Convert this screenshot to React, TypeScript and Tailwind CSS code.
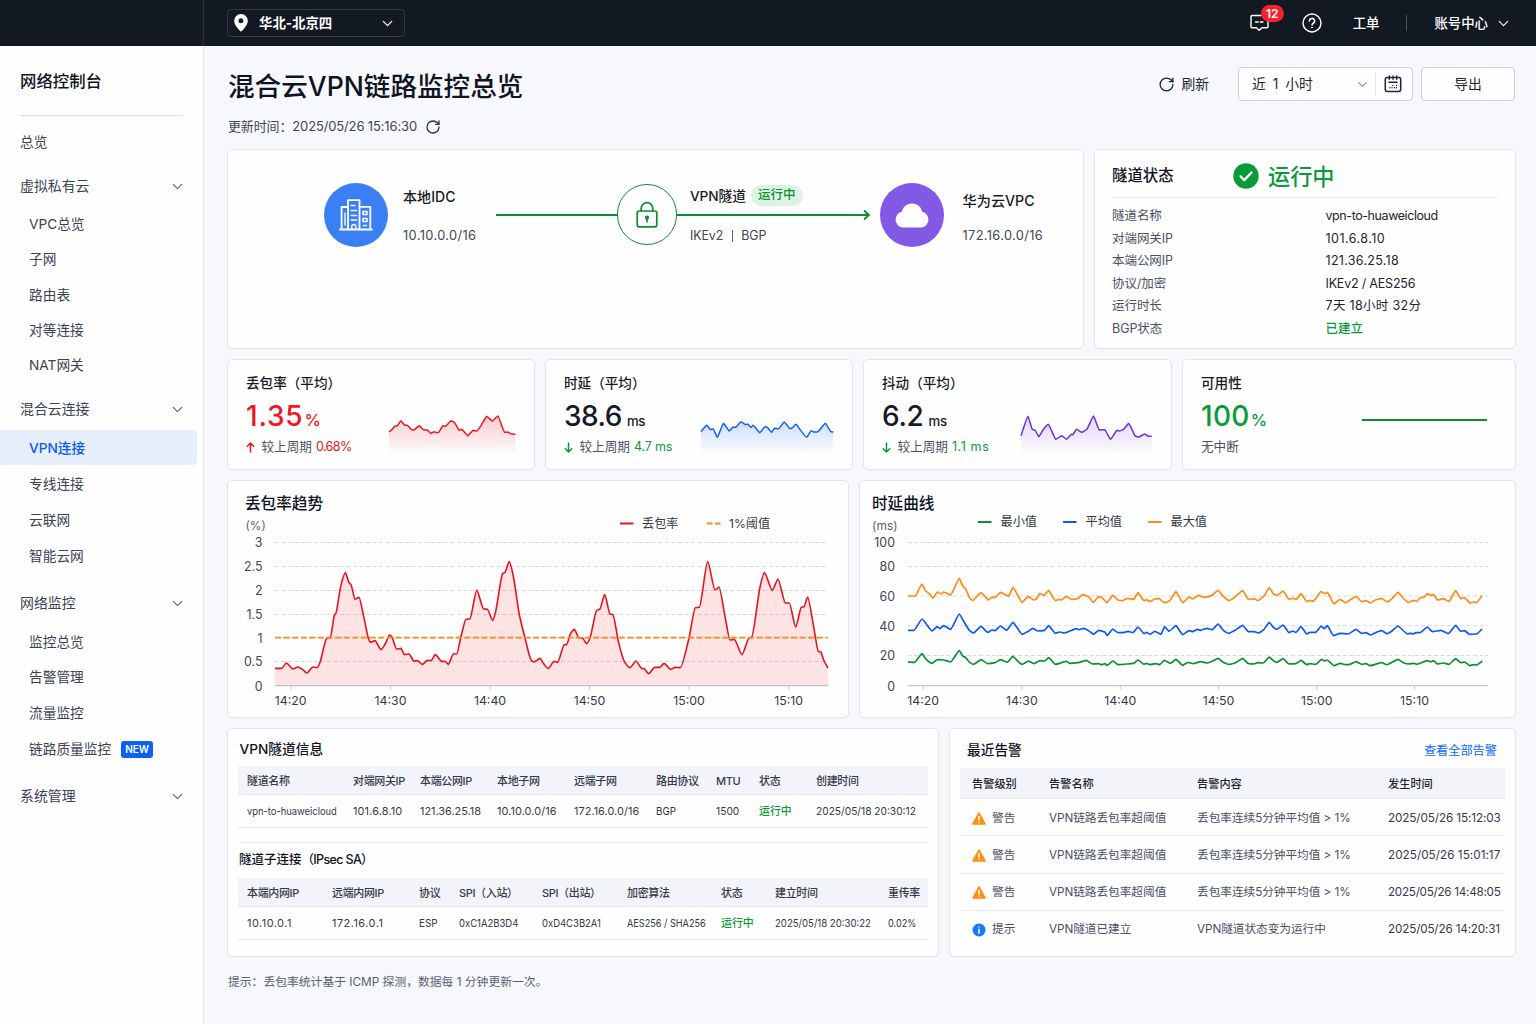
import React from "react";
import { ChevronDown, RotateCw } from "lucide-react";

type Point = [number, number];

/* ---------- chart data: flat x,y pairs ---------- */

const LOSS = [
  150, 571, 170, 571, 184, 555, 204, 573, 218, 567, 236, 577, 245, 585, 264, 567, 277, 569, 286, 550, 303, 485, 310, 478, 316, 480,
  328, 412, 333, 405, 347, 325, 361, 284, 372, 314, 378, 320, 390, 364, 402, 358, 415, 410, 430, 480, 436, 493, 450, 488, 468, 515,
  482, 495, 494, 471, 500, 475, 515, 513, 528, 511, 538, 530, 552, 528, 567, 549, 577, 548, 592, 559, 607, 547, 618, 548, 631, 530,
  650, 550, 660, 550, 670, 559, 685, 528, 695, 528, 708, 475, 723, 424, 735, 422, 755, 337, 776, 393, 787, 394, 803, 427, 812, 400,
  833, 287, 840, 283, 853, 251, 866, 300, 882, 405, 900, 480, 918, 545, 927, 552, 945, 541, 955, 556, 970, 571, 987, 550, 998, 553,
  1018, 500, 1025, 500, 1035, 470, 1048, 454, 1062, 480, 1072, 480, 1085, 497, 1095, 480, 1115, 397, 1125, 393, 1139, 349, 1155, 408,
  1164, 410, 1180, 490, 1198, 550, 1215, 569, 1233, 549, 1251, 572, 1257, 572, 1271, 587, 1289, 568, 1305, 568, 1317, 556, 1337, 574,
  1350, 568, 1366, 569, 1392, 480, 1411, 389, 1423, 388, 1448, 251, 1470, 336, 1482, 327, 1500, 415, 1515, 486, 1528, 484, 1551, 530,
  1572, 480, 1580, 478, 1605, 327, 1618, 284, 1642, 337, 1659, 303, 1681, 375, 1693, 375, 1712, 447, 1729, 388, 1737, 386, 1748, 357,
  1765, 440, 1780, 520, 1787, 522, 1796, 546, 1809, 570,
];

const LAT_MAX = [
  150, 354, 172, 354, 192, 318, 203, 339, 213, 346, 225, 361, 238, 342, 250, 348, 257, 342, 278, 351, 304, 301, 315, 325, 322, 331,
  335, 360, 345, 367, 369, 344, 392, 366, 402, 357, 411, 359, 427, 343, 452, 355, 465, 328, 492, 373, 511, 355, 527, 366, 535, 363,
  545, 347, 558, 352, 572, 338, 592, 368, 602, 364, 610, 366, 625, 355, 640, 364, 661, 361, 673, 350, 690, 355, 706, 373, 722, 356,
  731, 358, 747, 374, 764, 352, 780, 366, 793, 368, 808, 361, 827, 364, 840, 344, 858, 368, 867, 365, 875, 371, 890, 363, 903, 361,
  918, 374, 935, 368, 954, 341, 974, 374, 993, 357, 1004, 363, 1021, 352, 1036, 358, 1061, 353, 1080, 337, 1096, 355, 1113, 368,
  1131, 357, 1154, 338, 1171, 364, 1189, 362, 1199, 368, 1218, 354, 1234, 329, 1246, 347, 1258, 352, 1275, 339, 1293, 364, 1304, 360,
  1314, 365, 1329, 347, 1347, 371, 1356, 367, 1366, 370, 1389, 341, 1401, 347, 1408, 343, 1428, 378, 1446, 364, 1463, 374, 1476, 366,
  1494, 355, 1511, 371, 1524, 368, 1537, 375, 1552, 366, 1571, 361, 1587, 372, 1603, 361, 1620, 343, 1636, 361, 1651, 373, 1668, 367,
  1676, 371, 1688, 358, 1698, 358, 1708, 347, 1718, 352, 1726, 349, 1739, 366, 1755, 362, 1773, 370, 1793, 338, 1808, 362, 1820, 359,
  1836, 375, 1846, 372, 1856, 374, 1872, 353,
];

const LAT_AVG = [
  150, 457, 168, 457, 192, 423, 222, 459, 238, 446, 246, 452, 257, 443, 278, 454, 304, 408, 318, 432, 335, 458, 347, 465, 369, 445,
  389, 463, 402, 456, 411, 458, 427, 444, 446, 457, 465, 433, 492, 469, 511, 460, 524, 451, 540, 459, 560, 457, 572, 443, 592, 466,
  605, 462, 620, 465, 655, 452, 663, 455, 676, 451, 692, 458, 706, 469, 722, 457, 740, 462, 748, 472, 764, 453, 780, 464, 800, 463,
  810, 460, 825, 464, 840, 447, 858, 467, 866, 463, 876, 469, 890, 460, 909, 469, 920, 446, 933, 460, 954, 443, 974, 470, 993, 458,
  1004, 461, 1018, 454, 1028, 457, 1046, 451, 1063, 455, 1080, 438, 1096, 457, 1113, 466, 1131, 457, 1154, 442, 1171, 461, 1189, 461,
  1200, 465, 1218, 454, 1234, 433, 1246, 448, 1257, 454, 1275, 441, 1293, 464, 1304, 459, 1314, 463, 1329, 446, 1346, 468, 1356, 463,
  1373, 463, 1390, 444, 1399, 452, 1408, 443, 1426, 473, 1446, 466, 1471, 468, 1494, 454, 1511, 466, 1524, 464, 1537, 471, 1552, 464,
  1571, 458, 1587, 467, 1603, 458, 1620, 444, 1648, 468, 1658, 466, 1666, 468, 1674, 464, 1686, 464, 1708, 447, 1723, 461, 1749, 457,
  1771, 467, 1793, 442, 1808, 460, 1820, 458, 1834, 469, 1856, 468, 1872, 453,
];

const LAT_MIN = [
  150, 552, 170, 553, 192, 527, 205, 545, 222, 556, 238, 545, 257, 546, 278, 552, 304, 518, 315, 535, 322, 538, 335, 553, 347, 559,
  369, 545, 389, 557, 411, 554, 427, 545, 448, 553, 465, 535, 480, 550, 492, 559, 511, 549, 527, 557, 545, 548, 560, 549, 572, 539,
  592, 559, 625, 550, 635, 556, 661, 554, 685, 547, 703, 558, 722, 557, 731, 560, 740, 557, 748, 562, 765, 549, 780, 560, 808, 558,
  827, 556, 840, 546, 858, 559, 866, 556, 876, 560, 893, 557, 905, 560, 919, 547, 937, 556, 954, 544, 974, 562, 990, 553, 1006, 557,
  1028, 551, 1048, 555, 1063, 550, 1080, 541, 1093, 551, 1113, 559, 1131, 555, 1154, 541, 1171, 557, 1188, 558, 1199, 554, 1216, 555,
  1234, 537, 1246, 548, 1257, 553, 1275, 542, 1293, 558, 1314, 557, 1329, 547, 1346, 560, 1356, 557, 1373, 559, 1391, 544, 1399, 549,
  1408, 546, 1428, 563, 1446, 556, 1463, 560, 1476, 559, 1494, 551, 1511, 559, 1524, 557, 1537, 563, 1571, 554, 1587, 560, 1620, 544,
  1636, 554, 1651, 558, 1668, 556, 1676, 559, 1708, 548, 1718, 552, 1726, 548, 1739, 558, 1755, 555, 1773, 559, 1793, 542, 1808, 554,
  1820, 552, 1836, 563, 1846, 560, 1856, 561, 1873, 549,
];

const SPARK_LOSS = [
  414, 246, 422, 238, 428, 228, 434, 228, 443, 212, 452, 225, 459, 226, 470, 240, 476, 239, 488, 227, 499, 240, 508, 240, 517, 250,
  524, 245, 531, 248, 536, 247, 546, 227, 553, 229, 565, 213, 574, 217, 586, 241, 592, 238, 607, 257, 620, 241, 629, 243, 640, 226,
  653, 199, 667, 213, 681, 198, 697, 247, 705, 246, 712, 251, 724, 253,
];
const SPARK_DELAY = [
  1178, 245, 1192, 226, 1201, 239, 1208, 237, 1218, 262, 1233, 220, 1247, 243, 1257, 231, 1263, 232, 1276, 215, 1287, 224, 1292, 222,
  1301, 232, 1306, 226, 1322, 248, 1335, 230, 1341, 233, 1351, 247, 1358, 235, 1368, 236, 1382, 216, 1396, 236, 1401, 234, 1411, 223,
  1422, 241, 1437, 262, 1448, 242, 1454, 246, 1463, 246, 1483, 220, 1496, 245, 1502, 246,
];
const SPARK_JITTER = [
  382, 257, 398, 199, 408, 238, 415, 241, 423, 260, 432, 241, 445, 223, 462, 268, 476, 257, 487, 268, 498, 253, 501, 254, 510, 238,
  522, 247, 534, 237, 549, 198, 562, 240, 575, 239, 588, 268, 603, 241, 607, 243, 618, 238, 630, 220, 645, 258, 653, 261, 667, 252,
  675, 259, 683, 259,
];

/** Turns flat pairs into points, mapped by scale and offset. */
function toPoints(flat: number[], sx: number, sy: number, dx: number, dy: number): Point[] {
  const out: Point[] = [];
  for (let i = 0; i < flat.length; i += 2) out.push([flat[i] / sx + dx, flat[i + 1] / sy + dy]);
  return out;
}

/** Monotone cubic path through the points; k shortens the handles (0 = straight lines). */
function curve(p: Point[], k: number): string {
  const n = p.length;
  const slope = (i: number) => (p[i + 1][1] - p[i][1]) / (p[i + 1][0] - p[i][0]);
  const tangent = p.map((_, i) => {
    if (i === 0) return slope(0);
    if (i === n - 1) return slope(n - 2);
    const a = slope(i - 1);
    const b = slope(i);
    return a * b <= 0 ? 0 : (2 * a * b) / (a + b);
  });
  let d = `M${p[0][0].toFixed(2)} ${p[0][1].toFixed(2)}`;
  for (let i = 0; i < n - 1; i++) {
    const h = ((p[i + 1][0] - p[i][0]) / 3) * k;
    d += `C${(p[i][0] + h).toFixed(2)} ${(p[i][1] + tangent[i] * h).toFixed(2)} ${(p[i + 1][0] - h).toFixed(2)} ${(p[i + 1][1] - tangent[i + 1] * h).toFixed(2)} ${p[i + 1][0].toFixed(2)} ${p[i + 1][1].toFixed(2)}`;
  }
  return d;
}

const closeAt = (d: string, p: Point[], y: number) => `${d}L${p[p.length - 1][0]} ${y}L${p[0][0]} ${y}Z`;

/* ---------- icons ---------- */

const PinIcon = () => (
  <svg width="14" height="18" viewBox="0 0 14 18" className="shrink-0">
    <path fillRule="evenodd" fill="#fff" d="M7 0a6.800 6.800 0 0 1 6.800 6.800C13.800 11 9.500 15.500 7 17.800 4.500 15.500.2 11 .2 6.800A6.800 6.800 0 0 1 7 0Zm0 4.300a2.500 2.500 0 1 0 0 5 2.500 2.500 0 0 0 0-5Z" />
  </svg>
);

const MessageIcon = () => (
  <svg width="20" height="20" viewBox="0 0 20 20" fill="none" stroke="#fff" strokeWidth="1.400" strokeLinejoin="round" strokeLinecap="round">
    <path d="M2 2.500h15q1 0 1 1v10.200q0 1-1 1H12L9.200 17.200 6.400 14.700H2q-1 0-1-1V3.500q0-1 1-1Z" />
    <path d="M5.500 9h2.700M10.300 9h2.700" strokeWidth="1.300" />
  </svg>
);

const HelpIcon = () => (
  <svg width="20" height="20" viewBox="0 0 20 20" fill="none" stroke="#fff" strokeWidth="1.400" strokeLinecap="round">
    <circle cx="10" cy="10" r="9" />
    <path d="M7.400 8a2.600 2.600 0 1 1 3.900 2.250c-.9.550-1.300.95-1.300 1.850" strokeWidth="1.500" />
    <circle cx="10" cy="14.400" r=".5" fill="#fff" strokeWidth=".8" />
  </svg>
);

const CalendarIcon = () => (
  <svg width="18" height="18" viewBox="0 0 18 18" fill="none" stroke="#1d2433" strokeWidth="1.500" strokeLinecap="round" strokeLinejoin="round">
    <rect x="1.300" y="2.600" width="15.400" height="13.800" rx="1.800" />
    <path d="M5.300 1v3.200M9 1v3.200M12.700 1v3.200M5 7.200h8" strokeWidth="1.400" />
    <path d="M5.800 12.700h.01M8 12.700h.01M8.800 10.400h.01M10.400 12.700h.01M12.500 10.400h.01M12.500 12.700h.01" strokeWidth="1.400" />
  </svg>
);

const BuildingIcon = () => (
  <svg width="34" height="32" viewBox="0 0 34 32" fill="none" stroke="#fff" strokeWidth="1.800" strokeLinejoin="round" strokeLinecap="round">
    <path d="M1 30.500h32" />
    <path d="M9 30V1.200h11.500V30" />
    <path d="M9 8H2.600v22" />
    <path d="M20.500 7.800h10.800V30" />
    <path d="M12.200 6.500h3.600M12.200 11.500h5.300M12.200 16.500h5.300M12.200 21h5.300" strokeWidth="1.600" />
    <path d="M12.800 30v-3.500q2-2 4 0V30" strokeWidth="1.300" />
    <path d="M6 14v12" strokeWidth="1.300" />
    <path d="M24 12.500h4v3h-4zM24 19.500h4v3h-4z" strokeWidth="1.500" />
    <path d="M24.500 26.500h3" strokeWidth="1.500" />
  </svg>
);

const LockIcon = () => (
  <svg width="22" height="28" viewBox="0 0 22 28" fill="none" stroke="#0b8f35" strokeWidth="1.700" strokeLinejoin="round" strokeLinecap="round">
    <rect x="1.200" y="10" width="19.600" height="15.800" rx="2" />
    <path d="M5.200 10V7.500a5.800 5.800 0 0 1 11.600 0V10" />
    <circle cx="11" cy="16.600" r="1.300" fill="#0b8f35" />
    <path d="M11 17.500v3.300" />
  </svg>
);

const CloudIcon = () => (
  <svg width="36" height="26" viewBox="0 0 36 26" fill="#fff">
    <path d="M8.300 25.500A8 8 0 0 1 7.800 9.800 10.300 9.700 0 0 1 28.200 9.800 8 8 0 0 1 27.700 25.500Z" />
  </svg>
);

const WarnIcon = () => (
  <svg width="14" height="13" viewBox="0 0 14 13">
    <path d="M7 .9 13.200 12.100H.8Z" fill="#ff8f0f" stroke="#ff8f0f" strokeWidth="1.400" strokeLinejoin="round" />
    <path d="M7 4.600v3.600M7 10.200v.1" stroke="#fff" strokeWidth="1.500" strokeLinecap="round" />
  </svg>
);

const InfoIcon = () => (
  <svg width="14" height="14" viewBox="0 0 14 14">
    <circle cx="7" cy="7" r="6.500" fill="#1677ff" />
    <path d="M7 6.300v4M7 3.900v.1" stroke="#fff" strokeWidth="1.500" strokeLinecap="round" />
  </svg>
);

/* ---------- shared pieces ---------- */

const Card = ({ className = "", children }: { className?: string; children: React.ReactNode }) => (
  <section className={`rounded-[5px] border border-[#e3e6ee] bg-[#fefefe] shadow-[0_1px_2px_rgba(30,40,80,0.03)] ${className}`}>{children}</section>
);

type NavEntry = { label: string; kind: "top" | "group" | "sub"; gap: string; active?: boolean; isNew?: boolean };

const NAV: NavEntry[] = [
  { label: "总览", kind: "top", gap: "mt-[9px]" },
  { label: "虚拟私有云", kind: "group", gap: "mt-[10px]" },
  { label: "VPC总览", kind: "sub", gap: "mt-[4px]" },
  { label: "子网", kind: "sub", gap: "mt-px" },
  { label: "路由表", kind: "sub", gap: "mt-[2px]" },
  { label: "对等连接", kind: "sub", gap: "mt-px" },
  { label: "NAT网关", kind: "sub", gap: "mt-px" },
  { label: "混合云连接", kind: "group", gap: "mt-[10px]" },
  { label: "VPN连接", kind: "sub", gap: "mt-[4px]", active: true },
  { label: "专线连接", kind: "sub", gap: "mt-[2px]" },
  { label: "云联网", kind: "sub", gap: "mt-[2px]" },
  { label: "智能云网", kind: "sub", gap: "mt-[2px]" },
  { label: "网络监控", kind: "group", gap: "mt-[13px]" },
  { label: "监控总览", kind: "sub", gap: "mt-[5px]" },
  { label: "告警管理", kind: "sub", gap: "mt-px" },
  { label: "流量监控", kind: "sub", gap: "mt-[2px]" },
  { label: "链路质量监控", kind: "sub", gap: "mt-[2px]", isNew: true },
  { label: "系统管理", kind: "group", gap: "mt-[13px]" },
];

const Sidebar = () => (
  <aside className="w-[204px] shrink-0 border-r border-[#e4e7ee] bg-[#fefefe]">
    <div className="mx-5 flex h-[70px] items-center border-b border-[#dcdfe6] pt-[2px]">
      <h2 className="text-[16.400px] font-medium text-[#10141f]">网络控制台</h2>
    </div>
    <nav>
      {NAV.map((n) => (
        <div
          key={n.label}
          className={`${n.gap} flex items-center ${
            n.active ? "mr-[6px] h-[35px] rounded-r-[4px] bg-[#e7effd] pt-px font-medium text-[#0a59f7]" : "h-[34px] text-[#3b4254]"
          } ${n.kind === "sub" ? "pl-[29px] text-[13.700px]" : n.kind === "top" ? "pl-5 text-[13.700px]" : "pl-5 text-[13.900px]"}`}
        >
          <span>{n.label}</span>
          {n.isNew && (
            <span className="ml-[10px] flex h-[17px] w-8 items-center justify-center rounded-[3px] bg-[#0a62f5] text-[10px] font-semibold text-white">
              NEW
            </span>
          )}
          {n.kind === "group" && <ChevronDown className="mr-[17px] ml-auto text-[#5b6377]" size={17} strokeWidth={1.600} />}
        </div>
      ))}
    </nav>
  </aside>
);

const TopBar = () => (
  <header className="flex h-[46px] shrink-0 bg-[#131922] text-[13.400px] font-medium text-white">
    <div className="w-[204px] border-r border-[#2a303b]" />
    <div className="flex flex-1 items-center pr-[24px] pl-[23px]">
      <div className="flex h-7 w-[178px] items-center rounded-[4px] border border-[#333943] pr-2 pl-[6px]">
        <PinIcon />
        <span className="ml-[11px] font-bold">华北-北京四</span>
        <ChevronDown className="ml-auto" size={17} strokeWidth={1.800} />
      </div>
      <div className="relative ml-auto">
        <MessageIcon />
        <span className="absolute -top-[8px] left-[11px] flex h-[17px] w-[23px] items-center justify-center rounded-full bg-[#f5222d] text-[12px] font-semibold">
          12
        </span>
      </div>
      <span className="ml-[32px]">
        <HelpIcon />
      </span>
      <span className="ml-[31px]">工单</span>
      <span className="ml-[27px] h-4 w-px bg-[#4a505c]" />
      <span className="ml-[27px]">账号中心</span>
      <ChevronDown className="ml-[7px]" size={17} strokeWidth={1.600} />
    </div>
  </header>
);

const PageHead = () => (
  <div className="flex h-[103px] justify-between">
    <div>
      <h1 className="mt-[22px] h-9 text-[26.600px] leading-9 font-medium text-[#10141f]">混合云VPN链路监控总览</h1>
      <div className="mt-[13px] flex h-5 items-center text-[13px] text-[#3f4657]">
        <span className="tracking-[-0.140px]">更新时间：2025/05/26 15:16:30</span>
        <RotateCw className="ml-[8px] text-[#2a3040]" size={16} strokeWidth={1.900} />
      </div>
    </div>
    <div className="mt-[21px] flex h-[34px] items-center text-[13.800px] text-[#1d2433]">
      <RotateCw size={17} strokeWidth={1.900} />
      <span className="ml-[6px]">刷新</span>
      <div className="ml-[29px] flex h-[34px] w-[175px] items-center rounded-[4px] border border-[#cdd1dc] bg-[#fefefe] pl-[13px]">
        <span className="[word-spacing:3px]">近 1 小时</span>
        <ChevronDown className="ml-auto text-[#8a91a1]" size={15} strokeWidth={1.800} />
        <span className="mr-[8px] ml-[5px] h-6 w-px bg-[#e1e4eb]" />
        <span className="mr-[10px]">
          <CalendarIcon />
        </span>
      </div>
      <button className="mr-px ml-2 h-[34px] w-[94px] rounded-[4px] border border-[#cdd1dc] bg-[#fefefe]">导出</button>
    </div>
  </div>
);

/** Hybrid link diagram; its nodes sit at fixed places on the canvas. */
const Topology = () => (
  <Card className="relative h-[200px] w-[857px]">
    <svg className="absolute top-[54px] left-[268px]" width="376" height="22" viewBox="0 0 376 22" fill="none" stroke="#0b8f35" strokeWidth="1.800">
      <path d="M0 11H373M368 6.500l5 4.500-5 4.500" />
    </svg>
    <div className="absolute top-[33px] left-[96px] flex size-16 items-center justify-center rounded-full bg-[#3b7ff5]">
      <BuildingIcon />
    </div>
    <div className="absolute top-[37px] left-[175px] text-[#151a26]">
      <div className="h-5 text-[14px] leading-5 font-medium tracking-[0.100px]">本地IDC</div>
      <div className="mt-[19px] h-5 text-[12.800px] leading-5 tracking-[0.380px] text-[#3f4657]">10.10.0.0/16</div>
    </div>
    <div className="absolute top-[34px] left-[389px] flex h-[61px] w-[60px] items-center justify-center rounded-full border-[1.500px] border-[#0b8f35] bg-[#fefefe]">
      <LockIcon />
    </div>
    <div className="absolute top-[34px] left-[462px]">
      <div className="flex h-[22px] items-center text-[13.700px] font-medium text-[#151a26]">
        <span className="pt-[3px] tracking-[-0.100px]">VPN隧道</span>
        <span className="ml-[5px] flex h-[21px] w-[52px] items-center justify-center rounded-full bg-[#dcf3e3] text-[12.500px] text-[#0b8f35]">运行中</span>
      </div>
      <div className="mt-[20px] flex h-5 items-center text-[12.400px] text-[#3f4657]">
        <span className="tracking-[-0.100px]">IKEv2</span>
        <span className="mx-[8.500px] h-[12px] w-px bg-[#5a6172]" />
        <span>BGP</span>
      </div>
    </div>
    <div className="absolute top-[33px] left-[652px] flex size-16 items-center justify-center rounded-full bg-[#8259e6]">
      <CloudIcon />
    </div>
    <div className="absolute top-[41px] left-[734.500px] text-[#151a26]">
      <div className="h-5 text-[14.200px] leading-5 font-medium">华为云VPC</div>
      <div className="mt-[15px] h-5 text-[12.800px] leading-5 tracking-[0.360px] text-[#3f4657]">172.16.0.0/16</div>
    </div>
  </Card>
);

const STATUS: { label: string; value: string; style: string }[] = [
  { label: "隧道名称", value: "vpn-to-huaweicloud", style: "text-[#1d2433] tracking-[-0.420px]" },
  { label: "对端网关IP", value: "101.6.8.10", style: "text-[#1d2433] tracking-[0.480px]" },
  { label: "本端公网IP", value: "121.36.25.18", style: "text-[#1d2433] tracking-[0.300px]" },
  { label: "协议/加密", value: "IKEv2 / AES256", style: "text-[#1d2433] tracking-[-0.200px]" },
  { label: "运行时长", value: "7天 18小时 32分", style: "text-[#1d2433] tracking-[0.320px]" },
  { label: "BGP状态", value: "已建立", style: "font-medium text-[#0b9a3a]" },
];

const TunnelStatus = () => (
  <Card className="h-[200px] w-[422px] pr-[17px] pl-[17px]">
    <div className="flex h-[48px] items-center border-b border-[#e8eaf0] pt-[4px]">
      <h3 className="w-[121px] text-[15.400px] font-medium text-[#10141f]">隧道状态</h3>
      <svg width="26" height="26" viewBox="0 0 26 26">
        <circle cx="13" cy="13" r="12.700" fill="#0b9a3a" />
        <path d="m7.500 13.300 3.800 3.800 7.200-7.600" fill="none" stroke="#fff" strokeWidth="2.300" strokeLinecap="round" strokeLinejoin="round" />
      </svg>
      <span className="ml-[9px] pt-[2px] text-[22.200px] font-medium text-[#0b9a3a]">运行中</span>
    </div>
    <dl className="mt-[7px] text-[12.500px] text-[#4a5163]">
      {STATUS.map((s) => (
        <div key={s.label} className="flex h-[22.600px] items-center">
          <dt className="w-[213.500px] tracking-[-0.050px]">{s.label}</dt>
          <dd className={s.style}>{s.value}</dd>
        </div>
      ))}
    </dl>
  </Card>
);

type SparkProps = { flat: number[]; sx: number; left: number; width: number; color: string; id: string; opacity: number };

const Spark = ({ flat, sx, left, width, color, id, opacity }: SparkProps) => {
  const pts = toPoints(flat, sx, 3, -left / sx + 1, -60);
  const d = curve(pts, 0.35);
  return (
    <svg width={width} height="44" viewBox={`0 0 ${width} 44`} className="mt-[50px] shrink-0" fill="none">
      <defs>
        <linearGradient id={id} x1="0" y1="0" x2="0" y2="1">
          <stop offset="0" stopColor={color} stopOpacity={opacity} />
          <stop offset="1" stopColor={color} stopOpacity="0.020" />
        </linearGradient>
      </defs>
      <path d={closeAt(d, pts, 42.500)} fill={`url(#${id})`} />
      <path d={d} stroke={color} strokeWidth="1.500" strokeLinejoin="round" />
    </svg>
  );
};

type KpiProps = {
  title: string;
  value: string;
  valueStyle: string;
  unit: string;
  unitStyle: string;
  tone: string;
  foot: React.ReactNode;
  className: string;
  chart: React.ReactNode;
};

const Kpi = ({ title, value, valueStyle, unit, unitStyle, tone, foot, className, chart }: KpiProps) => (
  <Card className={`flex h-[111px] justify-between pl-[18px] ${className}`}>
    <div className="whitespace-nowrap">
      <div className="mt-[13px] h-5 text-[13.600px] leading-5 font-medium text-[#151a26]">{title}</div>
      <div className={`mt-[5px] flex h-9 items-baseline leading-9 ${tone}`}>
        <span className={`text-[28px] font-medium ${valueStyle}`}>{value}</span>
        <span className={unitStyle}>{unit}</span>
      </div>
      <div className="mt-[3.500px] flex h-5 items-center text-[12.600px] text-[#4a5163]">{foot}</div>
    </div>
    {chart}
  </Card>
);

const Trend = ({ up = false, value, style }: { up?: boolean; value: string; style: string }) => (
  <>
    <svg width="9" height="11" viewBox="0 0 9 11" fill="none" stroke={up ? "#e8121c" : "#0b9a3a"} strokeWidth="1.500" strokeLinecap="round" strokeLinejoin="round">
      <path d={up ? "M4.500 10V1.200M1.300 4.200l3.200-3.200 3.200 3.200" : "M4.500 1v8.800M1.300 6.800l3.200 3.200 3.200-3.200"} />
    </svg>
    <span className="ml-[6.500px]">较上周期</span>
    <span className={`ml-[4px] ${style}`}>{value}</span>
  </>
);

const PERCENT_UNIT = "ml-px text-[16.500px] font-medium";
const MS_UNIT = "ml-[5px] text-[13.200px] font-medium tracking-[-0.400px]";

const Kpis = () => (
  <div className="mt-[10px] flex">
    <Kpi
      className="w-[308px] pr-[17px]"
      title="丢包率（平均）"
      value="1.35"
      valueStyle="tracking-[0.800px]"
      unit="%"
      unitStyle={PERCENT_UNIT}
      tone="text-[#ee1620]"
      foot={<Trend up value="0.68%" style="tracking-[-0.600px] text-[#e8121c]" />}
      chart={<Spark flat={SPARK_LOSS} sx={2.45} left={414} width={129} color="#ee1620" id="kpi-loss" opacity={0.22} />}
    />
    <Kpi
      className="ml-[10px] w-[308px] pr-[17px]"
      title="时延（平均）"
      value="38.6"
      valueStyle="tracking-[-0.500px]"
      unit="ms"
      unitStyle={MS_UNIT}
      tone="text-[#151a26]"
      foot={<Trend value="4.7 ms" style="tracking-[-0.200px] text-[#0b9a3a]" />}
      chart={<Spark flat={SPARK_DELAY} sx={2.45} left={1178} width={135} color="#1060f8" id="kpi-delay" opacity={0.2} />}
    />
    <Kpi
      className="ml-[10px] w-[309px] pr-[18px]"
      title="抖动（平均）"
      value="6.2"
      valueStyle="tracking-[-0.300px]"
      unit="ms"
      unitStyle={MS_UNIT}
      tone="text-[#151a26]"
      foot={<Trend value="1.1 ms" style="tracking-[0.600px] text-[#0b9a3a]" />}
      chart={<Spark flat={SPARK_JITTER} sx={2.3025} left={382} width={133} color="#6a2fd6" id="kpi-jitter" opacity={0.2} />}
    />
    <Kpi
      className="ml-[10px] flex-1 pr-[28px]"
      title="可用性"
      value="100"
      valueStyle="tracking-[0.300px]"
      unit="%"
      unitStyle={PERCENT_UNIT}
      tone="text-[#0b9a3a]"
      foot="无中断"
      chart={<div className="mt-[59px] h-[2px] w-[125px] bg-[#0b8f35]" />}
    />
  </div>
);

const TIMES = ["14:20", "14:30", "14:40", "14:50", "15:00", "15:10"];

type AxesProps = { labels: string[]; ys: number[]; xs: number[]; x1: number; x2: number; labelX: number };

const Axes = ({ labels, ys, xs, x1, x2, labelX }: AxesProps) => (
  <g>
    {labels.map((l, i) => (
      <React.Fragment key={l}>
        {i < labels.length - 1 && <path d={`M${x1} ${ys[i]}H${x2}`} stroke="#d5d9e0" strokeWidth="1" strokeDasharray="4 2.500" />}
        <text x={labelX} y={ys[i] + 4.800} textAnchor="end" fontSize="12.400" fill="#3f4657">
          {l}
        </text>
      </React.Fragment>
    ))}
    <path d={`M${x1} ${ys[ys.length - 1]}H${x2}`} stroke="#c3c8d1" strokeWidth="1.200" />
    {xs.map((x, i) => (
      <React.Fragment key={x}>
        <path d={`M${x} ${ys[ys.length - 1]}v4`} stroke="#c3c8d1" strokeWidth="1" />
        <text x={x} y={ys[ys.length - 1] + 19.300} textAnchor="middle" fontSize="12.300" fill="#333a4a">
          {TIMES[i]}
        </text>
      </React.Fragment>
    ))}
  </g>
);

const LossChart = () => {
  const pts = toPoints(LOSS, 3, 3, -3, -3);
  const d = curve(pts, 0.7);
  return (
    <Card className="w-[622px]">
      <svg width="620" height="236" viewBox="0 0 620 236" className="block" fill="none">
        <text x="17" y="27.500" fontSize="15.600" fontWeight="500" fill="#10141f">丢包率趋势</text>
        <text x="17.500" y="48.500" fontSize="11.800" fill="#5a6172">(%)</text>
        <path d="M392 42.500h13.500" stroke="#ee1620" strokeWidth="2" />
        <text x="414" y="47" fontSize="12.200" fill="#333a4a">丢包率</text>
        <path d="M479 42.500h13.500" stroke="#ff8a14" strokeWidth="2" strokeDasharray="5.500 2.500" />
        <text x="501" y="47" fontSize="12.100" fill="#333a4a">1%阈值</text>
        <Axes labels={["3", "2.5", "2", "1.5", "1", "0.5", "0"]} ys={[61.500, 85.500, 109.500, 133.500, 157, 180.500, 204.700]} xs={[62.700, 162.500, 262, 361.500, 461, 560.700]} x1={47} x2={600} labelX={34.500} />
        <path d={closeAt(d, pts, 204.500)} fill="#f5222d" fillOpacity="0.120" />
        <path d={d} stroke="#e8121c" strokeWidth="1.600" strokeLinejoin="round" />
        <path d="M47 156.700H600" stroke="#ff8a14" strokeWidth="1.700" strokeDasharray="6 2.600" />
      </svg>
    </Card>
  );
};

const SERIES = [
  { name: "最小值", color: "#0b8f35", x: 118, data: LAT_MIN },
  { name: "平均值", color: "#0a59f7", x: 203, data: LAT_AVG },
  { name: "最大值", color: "#ff8a14", x: 288, data: LAT_MAX },
];

const LatencyChart = () => (
  <Card className="w-[657px]">
    <svg width="655" height="236" viewBox="0 0 655 236" className="block" fill="none">
      <text x="12" y="27.500" fontSize="15.600" fontWeight="500" fill="#10141f">时延曲线</text>
      <text x="12" y="48.500" fontSize="12" fill="#5a6172">(ms)</text>
      <Axes labels={["100", "80", "60", "40", "20", "0"]} ys={[61.500, 85.500, 115, 144.700, 174.500, 204.700]} xs={[63.200, 161.800, 260.300, 358.500, 456.800, 554.500]} x1={47.500} x2={628} labelX={35} />
      {SERIES.map((s) => (
        <g key={s.name}>
          <path d={`M${s.x} 41h13.500`} stroke={s.color} strokeWidth="2" />
          <text x={s.x + 22.500} y="45.200" fontSize="12.200" fill="#333a4a">{s.name}</text>
          <path d={curve(toPoints(s.data, 3, 3, -2, -3), 0.4)} stroke={s.color} strokeWidth="1.700" strokeLinejoin="round" />
        </g>
      ))}
    </svg>
  </Card>
);

type Cell = [text: string, style: string];
type TableProps = { cols: string; head: string[]; row: Cell[] };

const InfoTable = ({ cols, head, row }: TableProps) => (
  <div className="text-[10.900px] whitespace-nowrap text-[#333a4a]">
    <div className={`grid h-[29px] items-center border-b border-[#e3e6ee] bg-[#f3f4f9] pt-[2px] pl-[9px] font-medium ${cols}`}>
      {head.map((h) => (
        <span key={h} className="text-[11px] tracking-[-0.350px]">{h}</span>
      ))}
    </div>
    <div className={`grid h-[33px] items-center border-b border-[#e3e6ee] pt-px pl-[9px] ${cols}`}>
      {row.map(([text, style]) => (
        <span key={text} className={`origin-left ${style}`}>{text}</span>
      ))}
    </div>
  </div>
);

const RUNNING: Cell = ["运行中", "font-medium text-[#0b9a3a]"];

const TunnelInfo = () => (
  <Card className="h-[229px] w-[712px] px-[10px]">
    <h3 className="mt-[9px] h-[22px] pl-[1.500px] text-[13.700px] leading-[22px] font-medium text-[#10141f]">VPN隧道信息</h3>
    <div className="mt-[6px]">
      <InfoTable
        cols="grid-cols-[106px_67px_77px_77px_82px_60px_43px_57px_1fr]"
        head={["隧道名称", "对端网关IP", "本端公网IP", "本地子网", "远端子网", "路由协议", "MTU", "状态", "创建时间"]}
        row={[
          ["vpn-to-huaweicloud", "scale-x-[0.86]"],
          ["101.6.8.10", "tracking-[0.150px]"],
          ["121.36.25.18", ""],
          ["10.10.0.0/16", "tracking-[0.080px]"],
          ["172.16.0.0/16", "tracking-[0.050px]"],
          ["BGP", "scale-x-[0.9]"],
          ["1500", "scale-x-[0.94]"],
          RUNNING,
          ["2025/05/18 20:30:12", "scale-x-[0.935]"],
        ]}
      />
    </div>
    <h3 className="mt-[14px] flex h-[36px] items-center border-t border-[#eceef3] pl-px text-[12.500px] font-medium text-[#10141f]">
      隧道子连接<span className="tracking-[-0.650px]">（IPsec SA）</span>
    </h3>
    <InfoTable
      cols="grid-cols-[85px_87px_40px_83px_85px_94px_54px_113px_1fr]"
      head={["本端内网IP", "远端内网IP", "协议", "SPI（入站）", "SPI（出站）", "加密算法", "状态", "建立时间", "重传率"]}
      row={[
        ["10.10.0.1", "tracking-[0.500px]"],
        ["172.16.0.1", "tracking-[0.500px]"],
        ["ESP", "scale-x-[0.9]"],
        ["0xC1A2B3D4", "scale-x-[0.87]"],
        ["0xD4C3B2A1", "scale-x-[0.87]"],
        ["AES256 / SHA256", "scale-x-[0.84]"],
        RUNNING,
        ["2025/05/18 20:30:22", "scale-x-[0.88]"],
        ["0.02%", "scale-x-[0.84]"],
      ]}
    />
  </Card>
);

const ALERTS = [
  { level: "警告", name: "VPN链路丢包率超阈值", text: "丢包率连续5分钟平均值 > 1%", time: "2025/05/26 15:12:03", style: "tracking-[-0.090px]" },
  { level: "警告", name: "VPN链路丢包率超阈值", text: "丢包率连续5分钟平均值 > 1%", time: "2025/05/26 15:01:17", style: "tracking-[0.050px]" },
  { level: "警告", name: "VPN链路丢包率超阈值", text: "丢包率连续5分钟平均值 > 1%", time: "2025/05/26 14:48:05", style: "tracking-[-0.270px]" },
  { level: "提示", name: "VPN隧道已建立", text: "VPN隧道状态变为运行中", time: "2025/05/26 14:20:31", style: "tracking-[-0.150px]" },
];

const Alerts = () => (
  <Card className="h-[229px] w-[567px] px-[10px]">
    <div className="flex h-[39px] items-center justify-between pt-[3px] pr-[8px] pl-[7px]">
      <h3 className="text-[13.700px] font-medium text-[#10141f]">最近告警</h3>
      <a className="pt-[2px] text-[12.200px] text-[#0a6bff]">查看全部告警</a>
    </div>
    <div className="grid h-[31px] grid-cols-[77px_148px_191px_1fr] items-center border-b border-[#eceef3] bg-[#f3f4f9] pt-[2px] pl-[12px] text-[11.200px] font-medium text-[#1d2433]">
      <span>告警级别</span>
      <span>告警名称</span>
      <span>告警内容</span>
      <span>发生时间</span>
    </div>
    {ALERTS.map((a, i) => (
      <div
        key={a.time}
        className={`grid h-[37.300px] grid-cols-[77px_148px_191px_1fr] items-center pt-[3px] pl-[12px] text-[11.700px] whitespace-nowrap text-[#4a5163] ${
          i < ALERTS.length - 1 ? "border-b border-[#e8eaf0]" : "pb-[2px]"
        }`}
      >
        <span className="flex items-center gap-[6px]">
          <span className="-mt-px">{a.level === "警告" ? <WarnIcon /> : <InfoIcon />}</span>
          {a.level}
        </span>
        <span className="tracking-[-0.050px]">{a.name}</span>
        <span className="tracking-[-0.060px]">{a.text}</span>
        <span className={`text-[#333a4a] ${a.style}`}>{a.time}</span>
      </div>
    ))}
  </Card>
);

export default function App() {
  return (
    <div className="flex h-[1024px] w-[1536px] flex-col overflow-hidden bg-[#f7f8fc] font-['Inter','Noto_Sans_CJK_SC',sans-serif]">
      <TopBar />
      <div className="flex flex-1">
        <Sidebar />
        <main className="flex w-[1312px] flex-col pl-[23px]">
          <div className="pl-px">
            <PageHead />
          </div>
          <div className="flex justify-between">
            <Topology />
            <TunnelStatus />
          </div>
          <Kpis />
          <div className="mt-[10px] flex h-[238px] justify-between">
            <LossChart />
            <LatencyChart />
          </div>
          <div className="mt-[10px] flex justify-between">
            <TunnelInfo />
            <Alerts />
          </div>
          <p className="mt-[15px] pl-px text-[11.800px] leading-5 text-[#5a6172]">提示：丢包率统计基于 ICMP 探测，数据每 1 分钟更新一次。</p>
        </main>
      </div>
    </div>
  );
}
